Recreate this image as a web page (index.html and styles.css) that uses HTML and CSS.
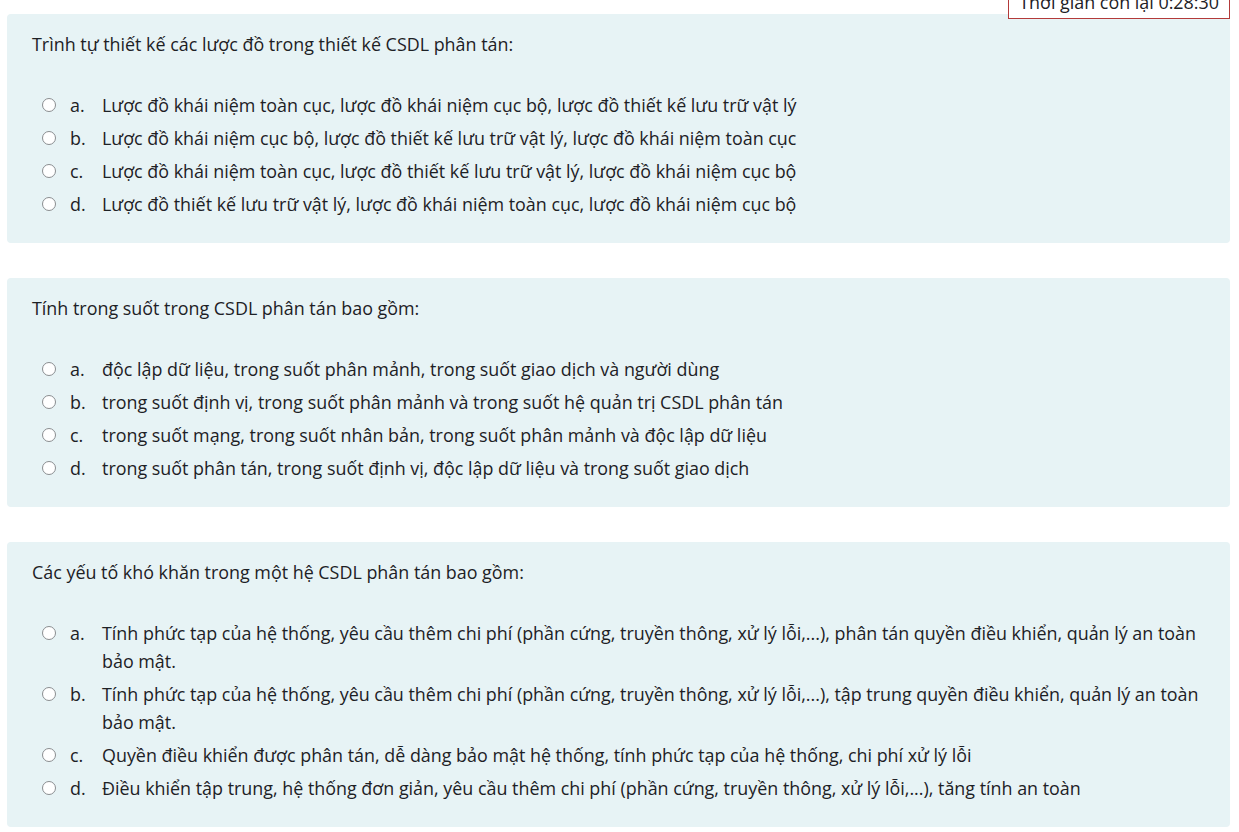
FILE: index.html
```html
<!DOCTYPE html>
<html lang="vi">
<head>
<meta charset="utf-8">
<title>Quiz</title>
<link rel="stylesheet" href="styles.css">
</head>
<body>
<div class="timer">Thời gian còn lại 0:28:30</div>
<main class="quiz">
  <section class="que">
    <div class="qtext">Trình tự thiết kế các lược đồ trong thiết kế CSDL phân tán:</div>
    <div class="answers">
      <div class="opt"><span class="radio"></span><span class="num">a.</span><span class="txt">Lược đồ khái niệm toàn cục, lược đồ khái niệm cục bộ, lược đồ thiết kế lưu trữ vật lý</span></div>
      <div class="opt"><span class="radio"></span><span class="num">b.</span><span class="txt">Lược đồ khái niệm cục bộ, lược đồ thiết kế lưu trữ vật lý, lược đồ khái niệm toàn cục</span></div>
      <div class="opt"><span class="radio"></span><span class="num">c.</span><span class="txt">Lược đồ khái niệm toàn cục, lược đồ thiết kế lưu trữ vật lý, lược đồ khái niệm cục bộ</span></div>
      <div class="opt"><span class="radio"></span><span class="num">d.</span><span class="txt">Lược đồ thiết kế lưu trữ vật lý, lược đồ khái niệm toàn cục, lược đồ khái niệm cục bộ</span></div>
    </div>
  </section>
  <section class="que">
    <div class="qtext">Tính trong suốt trong CSDL phân tán bao gồm:</div>
    <div class="answers">
      <div class="opt"><span class="radio"></span><span class="num">a.</span><span class="txt">độc lập dữ liệu, trong suốt phân mảnh, trong suốt giao dịch và người dùng</span></div>
      <div class="opt"><span class="radio"></span><span class="num">b.</span><span class="txt">trong suốt định vị, trong suốt phân mảnh và trong suốt hệ quản trị CSDL phân tán</span></div>
      <div class="opt"><span class="radio"></span><span class="num">c.</span><span class="txt">trong suốt mạng, trong suốt nhân bản, trong suốt phân mảnh và độc lập dữ liệu</span></div>
      <div class="opt"><span class="radio"></span><span class="num">d.</span><span class="txt">trong suốt phân tán, trong suốt định vị, độc lập dữ liệu và trong suốt giao dịch</span></div>
    </div>
  </section>
  <section class="que">
    <div class="qtext">Các yếu tố khó khăn trong một hệ CSDL phân tán bao gồm:</div>
    <div class="answers">
      <div class="opt"><span class="radio"></span><span class="num">a.</span><span class="txt">Tính phức tạp của hệ thống, yêu cầu thêm chi phí (phần cứng, truyền thông, xử lý lỗi,...), phân tán quyền điều khiển, quản lý an toàn bảo mật.</span></div>
      <div class="opt"><span class="radio"></span><span class="num">b.</span><span class="txt">Tính phức tạp của hệ thống, yêu cầu thêm chi phí (phần cứng, truyền thông, xử lý lỗi,...), tập trung quyền điều khiển, quản lý an toàn bảo mật.</span></div>
      <div class="opt"><span class="radio"></span><span class="num">c.</span><span class="txt">Quyền điều khiển được phân tán, dễ dàng bảo mật hệ thống, tính phức tạp của hệ thống, chi phí xử lý lỗi</span></div>
      <div class="opt"><span class="radio"></span><span class="num">d.</span><span class="txt">Điều khiển tập trung, hệ thống đơn giản, yêu cầu thêm chi phí (phần cứng, truyền thông, xử lý lỗi,...), tăng tính an toàn</span></div>
    </div>
  </section>
</main>
</body>
</html>
```

FILE: styles.css
```css
html, body {
  margin: 0;
  padding: 0;
  background: #ffffff;
}
body {
  font-family: "Open Sans", "Noto Sans", sans-serif;
  font-size: 17.9px;
  color: #1d2125;
}
.quiz {
  display: flex;
  flex-direction: column;
  gap: 35px;
  padding: 14px 9px 0 7px;
}
.que {
  background: #e7f3f5;
  border-radius: 4px;
  padding: 16px 28px 25px 25px;
}
.qtext {
  line-height: 28px;
  margin-bottom: 33px;
}
.answers {
  display: flex;
  flex-direction: column;
  gap: 5px;
  padding-left: 10px;
}
.opt {
  display: flex;
  align-items: flex-start;
  line-height: 28px;
}
.radio {
  flex: none;
  width: 12px;
  height: 12px;
  border: 1px solid #8a8d90;
  border-radius: 50%;
  background: #fff;
  margin-top: 7px;
  margin-right: 14px;
}
.num {
  flex: none;
  width: 32px;
}
.txt {
  flex: 1;
}
.timer {
  position: fixed;
  top: -14px;
  right: 9px;
  width: 200px;
  height: 31px;
  border: 1px solid #b33a3a;
  background: #fff;
  padding: 0 10px;
  line-height: 31px;
  text-align: right;
  white-space: nowrap;
}
```
